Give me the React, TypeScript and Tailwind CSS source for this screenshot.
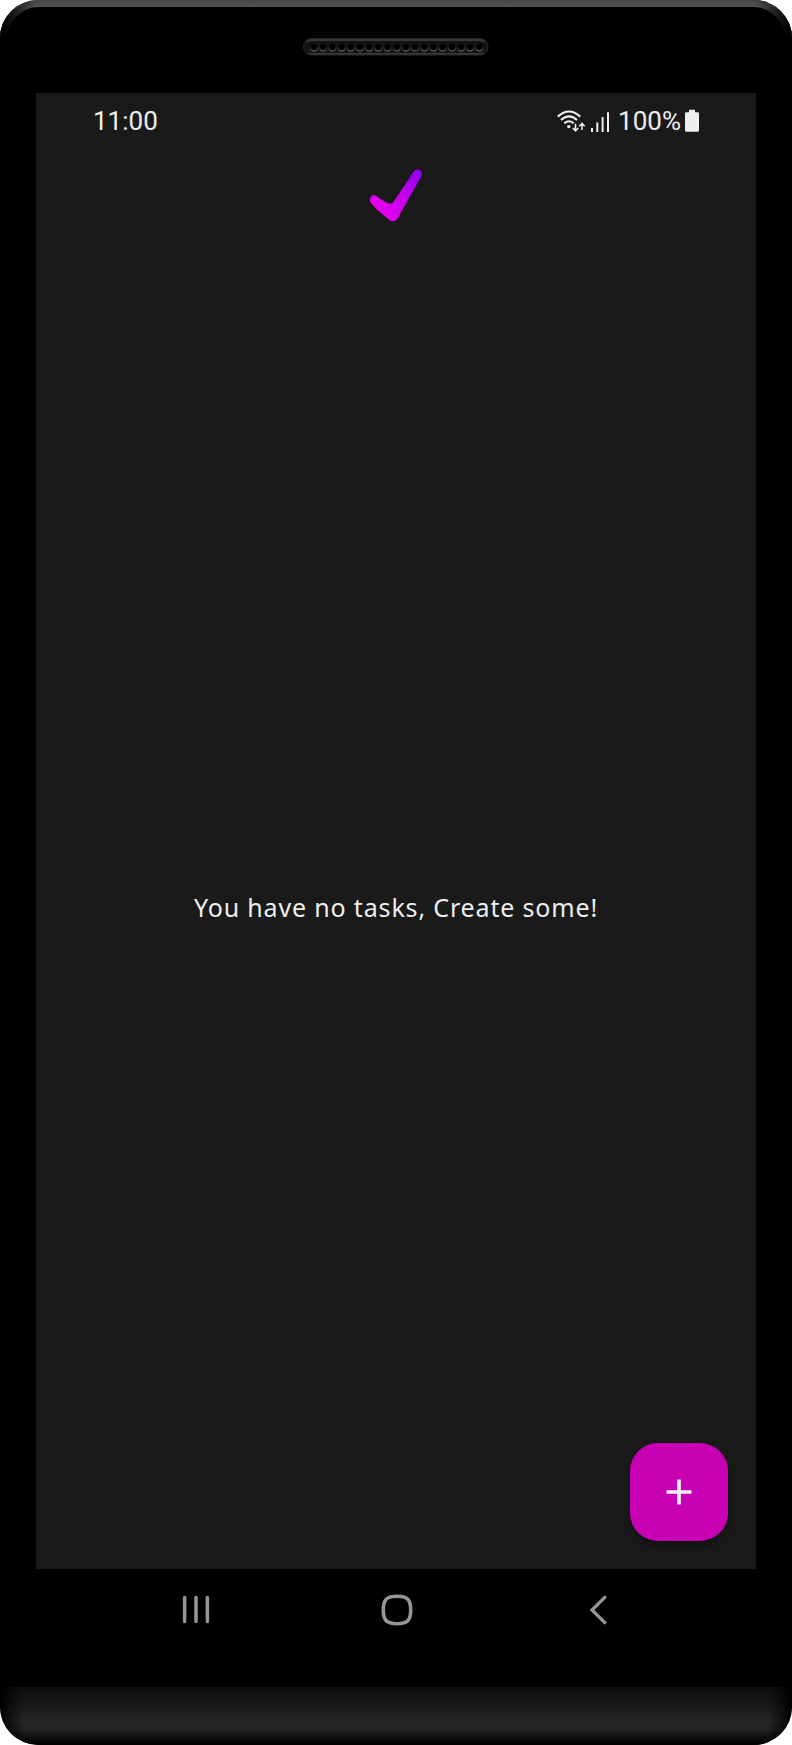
import React from "react";

const holes = Array.from({ length: 19 }, (_, i) => 11 + i * 9.19);

function Speaker() {
  return (
    <svg width="186" height="18" viewBox="0 0 186 18" aria-hidden="true">
      <defs>
        <linearGradient id="grille" x1="0" y1="0" x2="0" y2="1">
          <stop offset="0" stopColor="#303030" />
          <stop offset="0.18" stopColor="#3a3a3a" />
          <stop offset="0.22" stopColor="#161616" />
          <stop offset="0.84" stopColor="#141414" />
          <stop offset="0.9" stopColor="#404040" />
          <stop offset="1" stopColor="#303030" />
        </linearGradient>
        <linearGradient id="hole" x1="0" y1="0" x2="0" y2="1">
          <stop offset="0.25" stopColor="#141414" />
          <stop offset="1" stopColor="#686868" />
        </linearGradient>
      </defs>
      <rect x="0.5" y="0.5" width="184.5" height="16.5" rx="8.2" fill="url(#grille)" stroke="#282828" />
      <rect x="3" y="3" width="179.5" height="12" rx="6" fill="#131313" />
      {holes.map((x) => (
        <g key={x}>
          <circle cx={x} cy="9.6" r="4" fill="url(#hole)" />
          <circle cx={x} cy="9" r="3.2" fill="#000" />
        </g>
      ))}
    </svg>
  );
}

function StatusBar() {
  return (
    <div className="flex h-[56px] items-center justify-between pl-[57px] pr-[57px] font-[Roboto,sans-serif] text-[26px] text-[#eeeeee]">
      <span className="leading-[56px]">11:00</span>
      <div className="flex h-full items-center">
        <svg width="54" height="24" viewBox="555 108 54 24" fill="none" stroke="#eeeeee" aria-hidden="true">
          <path d="M556.8 115.6Q568 105.4 579.2 115.6" strokeWidth="2.1" />
          <path d="M560 119Q568 111.6 576 119" strokeWidth="2.1" />
          <path d="M563.3 122.3Q568 118.2 572.7 122.3" strokeWidth="2.1" />
          <circle cx="567.8" cy="125.6" r="1.7" fill="#eeeeee" stroke="none" />
          <path d="M574.5 122.8V129.4M571.8 127L574.5 129.8L577.2 127M581 129V122.8M578.3 125.2L581 122.4L583.7 125.2" strokeWidth="1.5" />
          <path d="M591 127V131M596.3 121.5V131M601.6 116V131M607 111.3V131" strokeWidth="2" />
        </svg>
        <span className="ml-[8px] leading-[56px]">100%</span>
        <svg className="ml-[4px]" width="14" height="24" viewBox="0 0 14 24" aria-hidden="true">
          <path d="M4 0.8H10V3.2H12.8Q14 3.2 14 4.4V21.6Q14 22.8 12.8 22.8H1.2Q0 22.8 0 21.6V4.4Q0 3.2 1.2 3.2H4Z" fill="#eeeeee" />
        </svg>
      </div>
    </div>
  );
}

function Logo() {
  return (
    <svg width="54" height="54" viewBox="369 168 54 54" aria-hidden="true">
      <defs>
        <linearGradient id="tick" x1="378" y1="212" x2="422" y2="168" gradientUnits="userSpaceOnUse">
          <stop offset="0" stopColor="#e600ee" />
          <stop offset="0.4" stopColor="#cc00ee" />
          <stop offset="1" stopColor="#8a00f0" />
        </linearGradient>
      </defs>
      <path
        d="M371.2 196.3Q373.8 193.9 377 196.2C382 200.2 386.5 203 390.5 203.8Q392.4 203.6 393.6 201.8L414 171.3Q416.3 168.2 420 169.9Q423 172.2 421.5 176L400.5 213Q397 221.8 393.3 221.3Q390.8 221.2 386.5 217.4C380.5 213 375.3 208.3 370.6 202.8Q368.9 199 371.2 196.3Z"
        fill="url(#tick)"
      />
    </svg>
  );
}

function NavBar() {
  return (
    <nav className="flex h-[82px] shrink-0 items-center bg-black px-[182px] text-[#969696]">
      <button aria-label="Recent apps" className="flex">
        <svg width="28" height="30" viewBox="0 0 28 30" fill="none" stroke="currentColor" strokeWidth="3.5" strokeLinecap="round">
          <path d="M2.6 2.6V26.4M14 2.6V26.4M25.4 2.6V26.4" />
        </svg>
      </button>
      <button aria-label="Home" className="ml-[171px] flex">
        <svg width="32" height="32" viewBox="0 0 32 32" fill="none" stroke="currentColor" strokeWidth="3.6">
          <path d="M16 2.3C26.5 2.3 29.7 5.5 29.7 16S26.5 29.7 16 29.7S2.3 26.5 2.3 16S5.5 2.3 16 2.3Z" />
        </svg>
      </button>
      <button aria-label="Back" className="ml-[176px] flex">
        <svg width="18" height="30" viewBox="0 0 18 30" fill="none" stroke="currentColor" strokeWidth="3.3" strokeLinecap="round">
          <path d="M15.8 2.3L3 15L15.8 27.7" />
        </svg>
      </button>
    </nav>
  );
}

export default function App() {
  return (
    <div className="h-[1745px] w-[792px] bg-white">
      <div className="flex h-full flex-col overflow-hidden rounded-[38px] bg-black">
        <header className="h-[93px] shrink-0 bg-[linear-gradient(to_right,#000_2px,transparent_36px,transparent_756px,#000_790px),linear-gradient(to_bottom,#484848_0px,#505050_7px,#484848_16px,#000_42px)] px-[7px] pt-[7px]">
          <div className="flex h-full justify-center rounded-t-[32px] bg-black pr-[1px] pt-[31px]">
            <Speaker />
          </div>
        </header>

        <main className="mx-[36px] flex h-[1476px] shrink-0 flex-col bg-[#1a1a1a]">
          <StatusBar />
          <div className="flex h-[74px] justify-center pt-[19px]">
            <Logo />
          </div>
          <div className="flex flex-1 items-center justify-center pt-[147px]">
            <p className="whitespace-nowrap font-['Noto_Sans',sans-serif] text-[25px] leading-[36px] tracking-[0.84px] text-[#eeeeee]">
              You have no tasks, Create some!
            </p>
          </div>
          <div className="flex h-[126px] justify-end pr-[28px]">
            <button
              aria-label="Add task"
              className="flex size-[98px] items-center justify-center rounded-[28px] bg-[#c800b4] shadow-[0_6px_12px_rgba(0,0,0,0.3)]"
            >
              <svg width="26" height="26" viewBox="0 0 26 26" fill="none" stroke="#eeeeee" strokeWidth="3.7">
                <path d="M13 0.5V25.5M0.5 13H25.5" />
              </svg>
            </button>
          </div>
        </main>

        <NavBar />
        <footer className="mt-auto h-[58px] shrink-0 overflow-hidden">
          <div className="h-full rounded-b-[38px] bg-[linear-gradient(to_right,#000_0px,rgba(0,0,0,0.5)_8px,transparent_24px,transparent_768px,rgba(0,0,0,0.5)_784px,#000_792px),linear-gradient(to_bottom,#0d0d0d_0px,#191919_20px,#272727_34px,#252525_43px,#111_52px,#000_58px)] shadow-[inset_0_-8px_14px_-4px_rgba(0,0,0,0.7)]" />
        </footer>
      </div>
    </div>
  );
}
